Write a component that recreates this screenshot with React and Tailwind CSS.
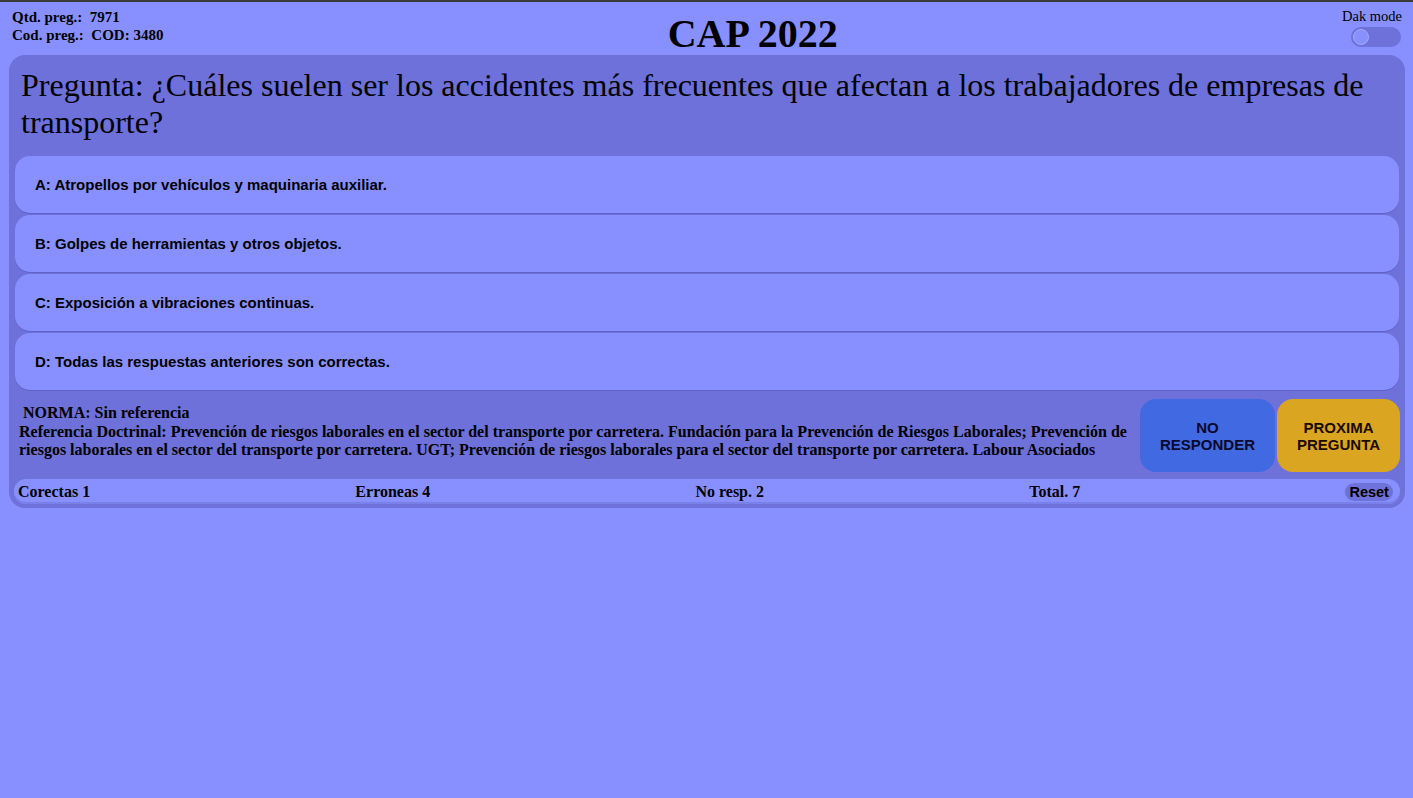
const opciones = [
    'A: Atropellos por vehículos y maquinaria auxiliar.',
    'B: Golpes de herramientas y otros objetos.',
    'C: Exposición a vibraciones continuas.',
    'D: Todas las respuestas anteriores son correctas.',
];

const serif = { fontFamily: '"Liberation Serif", "Times New Roman", serif' };
const sans = { fontFamily: '"Liberation Sans", Arial, sans-serif' };

export default function App() {
    return (
        <div className="min-h-[798px] bg-[#8890ff] border-t-2 border-[#3b3b3b] text-black" style={serif}>
            <div className="flex justify-between items-start pl-3 pr-[11px] h-[53px]">
                <div className="pt-[6px] text-[15px] font-bold leading-[18px]">
                    <div>Qtd. preg.:&nbsp; 7971</div>
                    <div>Cod. preg.:&nbsp; COD: 3480</div>
                </div>
                <h1 className="text-[40px] font-bold leading-none mt-[12px]">CAP 2022</h1>
                <div className="flex flex-col items-center pt-[6px]">
                    <span className="text-[14.5px] leading-[17px]">Dak mode</span>
                    <div className="mt-[2px] ml-[8px] w-[50px] h-[20px] rounded-full bg-[#6d71d9] flex items-center px-[2px]">
                        <div className="w-[16px] h-[16px] rounded-full bg-[#8890ff] border border-[#a4aaff]" />
                    </div>
                </div>
            </div>

            <div className="ml-[9px] mr-[8px] bg-[#6d71d9] rounded-[16px] pb-[4px]">
                <h2 className="h-[101px] px-[12px] pt-[12px] text-[32px] font-normal leading-[37px]">
                    Pregunta: ¿Cuáles suelen ser los accidentes más frecuentes que afectan a los trabajadores de empresas de transporte?
                </h2>

                <div className="flex flex-col gap-[2px] px-[6px]">
                    {opciones.map((o) => (
                        <div
                            key={o}
                            className="h-[57px] rounded-[15px] bg-[#8890ff] flex items-center px-5 pt-[1px] text-[15px] font-bold shadow-[0_1px_0_#5f63c9]"
                            style={sans}
                        >
                            {o}
                        </div>
                    ))}
                </div>

                <div className="flex items-stretch mt-[9px] pl-[10px] pr-[5px]">
                    <div className="flex-1 pr-1 pt-[5px] text-[16px] font-bold leading-[18.5px]">
                        <div>&nbsp;NORMA: Sin referencia</div>
                        <div>
                            Referencia Doctrinal: Prevención de riesgos laborales en el sector del transporte por carretera. Fundación para la Prevención de Riesgos Laborales; Prevención de riesgos laborales en el sector del transporte por carretera. UGT; Prevención de riesgos laborales para el sector del transporte por carretera. Labour Asociados
                        </div>
                    </div>
                    <button
                        className="w-[135px] h-[73px] rounded-[16px] bg-[#4169e1] text-[15px] font-bold leading-[17px] text-[#0a0a2a]"
                        style={sans}
                    >
                        NO<br />RESPONDER
                    </button>
                    <button
                        className="ml-[2px] w-[123px] h-[73px] rounded-[16px] bg-[#daa520] text-[15px] font-bold leading-[17px] text-[#1a0a00]"
                        style={sans}
                    >
                        PROXIMA<br />PREGUNTA
                    </button>
                </div>

                <div className="mx-[5px] mt-[7px] h-[25px] rounded-[12px] bg-[#8890ff] flex justify-between items-center pl-1 pr-[7px] text-[16px] font-bold shadow-[inset_0_-2px_0_#7a80ea]">
                    <span>Corectas 1</span>
                    <span>Erroneas 4</span>
                    <span>No resp. 2</span>
                    <span>Total. 7</span>
                    <button className="rounded-full bg-[#6d71d9] px-[4px] text-[14.5px] font-bold leading-[18px]" style={sans}>
                        Reset
                    </button>
                </div>
            </div>
        </div>
    );
}
